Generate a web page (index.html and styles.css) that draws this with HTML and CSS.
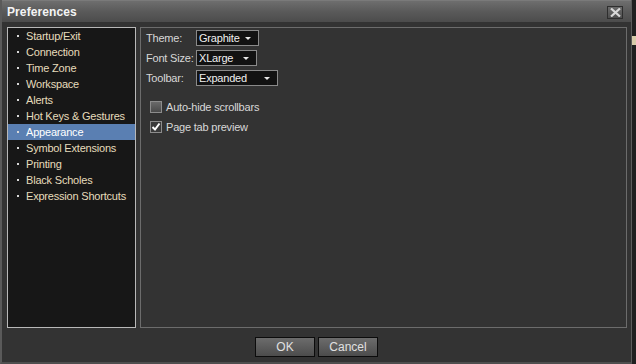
FILE: index.html
```html
<!DOCTYPE html>
<html>
<head>
  <title>Preferences</title>
  <link rel="stylesheet" href="styles.css">
</head>
<body>
  <div class="window">
    <div class="titlebar">
      <span class="title">Preferences</span>
      <button class="close-btn" title="Close">
        <svg width="11" height="9" viewBox="0 0 11 9">
          <path d="M1 0.5 L10 8.5 M10 0.5 L1 8.5" stroke="#d8d8d8" stroke-width="2.2"/>
        </svg>
      </button>
    </div>

    <div class="content">
      <ul class="nav">
        <li>Startup/Exit</li>
        <li>Connection</li>
        <li>Time Zone</li>
        <li>Workspace</li>
        <li>Alerts</li>
        <li>Hot Keys &amp; Gestures</li>
        <li class="selected">Appearance</li>
        <li>Symbol Extensions</li>
        <li>Printing</li>
        <li>Black Scholes</li>
        <li>Expression Shortcuts</li>
      </ul>

      <div class="settings">
        <div class="row">
          <label class="field-label">Theme:</label>
          <div class="dropdown w-theme">Graphite <span class="arrow"></span></div>
        </div>
        <div class="row">
          <label class="field-label">Font Size:</label>
          <div class="dropdown w-font">XLarge <span class="arrow"></span></div>
        </div>
        <div class="row">
          <label class="field-label">Toolbar:</label>
          <div class="dropdown w-toolbar">Expanded <span class="arrow"></span></div>
        </div>

        <div class="checks">
          <div class="check-row">
            <span class="checkbox"></span>
            <span>Auto-hide scrollbars</span>
          </div>
          <div class="check-row">
            <span class="checkbox checked">
              <svg width="10" height="10" viewBox="0 0 10 10">
                <path d="M1.5 5 L4 7.5 L8.5 1.5" stroke="#fff" stroke-width="2" fill="none"/>
              </svg>
            </span>
            <span>Page tab preview</span>
          </div>
        </div>
      </div>
    </div>

    <div class="buttons">
      <button class="btn">OK</button>
      <button class="btn">Cancel</button>
    </div>
  </div>
  <div class="side-strip"><span class="strip-mark"></span></div>
</body>
</html>
```

FILE: styles.css
```css
body {
  margin: 0;
  background: #1c1c1c;
  font-family: "Liberation Sans", Arial, sans-serif;
  font-size: 11px;
  letter-spacing: -0.2px;
  display: flex;
  height: 364px;
  overflow: hidden;
}

.window {
  width: 629px;
  height: 362px;
  background: #333333;
  border-left: 2px solid #5a5a5a;
  border-right: 1px solid #5c5c5c;
  border-bottom: 2px solid #4e4e4e;
  display: flex;
  flex-direction: column;
  flex-shrink: 0;
}

.titlebar {
  height: 22px;
  background: linear-gradient(to bottom, #6e6e6e, #5a5a5a 50%, #4c4c4c);
  border-top: 1px solid #7a7a7a;
  box-sizing: border-box;
  display: flex;
  align-items: center;
  justify-content: space-between;
  padding: 0 8px 0 5px;
}

.title {
  color: #f4f4f4;
  font-weight: bold;
  font-size: 12px;
  letter-spacing: 0.1px;
}

.close-btn {
  width: 16px;
  height: 13px;
  padding: 0;
  border: 1px solid #2e2e2e;
  background: linear-gradient(to bottom, #6a6a6a, #4e4e4e);
  display: flex;
  align-items: center;
  justify-content: center;
  margin-top: 1px;
}

.content {
  display: flex;
  gap: 4px;
  padding: 5px 0 0 5px;
  height: 301px;
}

.nav {
  list-style: none;
  margin: 0;
  padding: 0;
  width: 127px;
  background: #171717;
  border: 1px solid #b8b8b8;
}

.nav li {
  height: 16px;
  line-height: 16px;
  padding-left: 18px;
  color: #e6dcbc;
  position: relative;
}

.nav li::before {
  content: "";
  position: absolute;
  left: 9px;
  top: 7px;
  width: 2px;
  height: 2px;
  background: #d8d8d8;
}

.nav li.selected {
  background: #5a7fb2;
  color: #ffffff;
}

.settings {
  width: 480px;
  border: 1px solid #6c6c6c;
  padding: 2px 0 0 5px;
  color: #d8d8d8;
}

.row {
  display: flex;
  align-items: center;
  height: 16px;
  margin-bottom: 4px;
}

.field-label {
  width: 50px;
}

.dropdown {
  height: 14px;
  border: 1px solid #8a8a8a;
  background: #121212;
  color: #f0f0f0;
  line-height: 14px;
  padding-left: 2px;
  position: relative;
}

.w-theme { width: 59px; }
.w-font { width: 57px; }
.w-toolbar { width: 78px; }

.arrow {
  position: absolute;
  right: 7px;
  top: 6px;
  border-left: 3px solid transparent;
  border-right: 3px solid transparent;
  border-top: 3px solid #e8e8e8;
}

.checks {
  margin-top: 11px;
  padding-left: 4px;
}

.check-row {
  display: flex;
  align-items: center;
  gap: 4px;
  height: 20px;
  color: #d8d8d8;
}

.checkbox {
  width: 10px;
  height: 10px;
  border: 1px solid #8c8c8c;
  background: linear-gradient(to bottom, #6a6a6a, #4a4a4a);
  display: flex;
  align-items: center;
  justify-content: center;
}

.checkbox.checked {
  background: #3a3a3a;
}

.buttons {
  display: flex;
  justify-content: center;
  gap: 3px;
  margin-top: 9px;
}

.btn {
  height: 20px;
  width: 60px;
  border: 1px solid #0c0c0c;
  background: linear-gradient(to bottom, #6c6c6c, #4c4c4c);
  color: #e0e0e0;
  font-family: "Liberation Sans", Arial, sans-serif;
  font-size: 12px;
  padding: 0;
}

.side-strip {
  flex: 1;
  background: #202020;
  position: relative;
}

.strip-mark {
  position: absolute;
  top: 36px;
  left: 0;
  width: 4px;
  height: 9px;
  background: #d8ccaa;
}
```
